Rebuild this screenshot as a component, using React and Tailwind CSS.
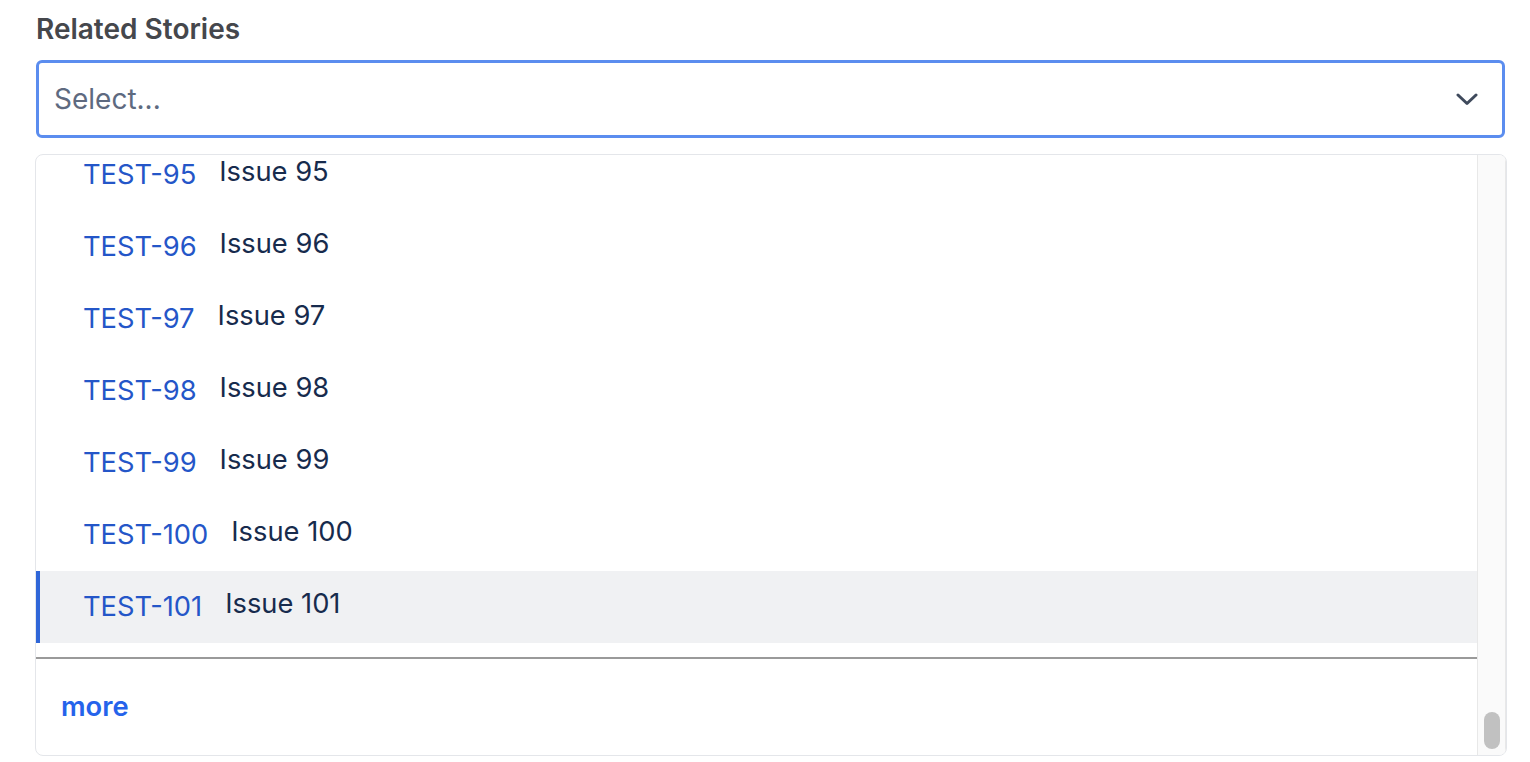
import React from "react";

const rows = [95, 96, 97, 98, 99, 100, 101];

export default function App() {
  return (
    <div
      className="w-[1530px] h-[762px] bg-white overflow-hidden pl-[36px] pt-[11px]"
      style={{ fontFamily: "Inter, 'Noto Sans', sans-serif" }}
    >
      <div className="text-[28px] leading-[36px] font-semibold text-[#45474c]">Related Stories</div>
      <div className="mt-[13px] w-[1469px] h-[78px] border-[3px] border-[#5b8def] rounded-[6px] flex items-center pl-[15px] pr-[24px]">
        <span className="flex-1 text-[28px] text-[#5e6a80]">Select...</span>
        <svg width="22" height="13" viewBox="0 0 22 13" fill="none">
          <path d="M2 2 L11 10.5 L20 2" stroke="#3f4a5c" strokeWidth="3" strokeLinecap="round" strokeLinejoin="round" />
        </svg>
      </div>
      <div className="mt-[16px] ml-[-1px] w-[1472px] h-[602px] border border-[#e4e6ea] rounded-[8px] flex overflow-hidden">
        <div className="flex-1 flex flex-col overflow-hidden">
          <div className="mt-[-16px]">
            {rows.map((n) => {
              const active = n === 101;
              return (
                <div
                  key={n}
                  className={
                    active
                      ? "h-[72px] flex items-center text-[27.3px] bg-[#f0f1f3] border-l-4 border-[#2f66d8] pl-[43px]"
                      : "h-[72px] flex items-center text-[27.3px] pl-[47px]"
                  }
                >
                  <span className="text-[#2456c8]">TEST-{n}</span>
                  <span className="ml-[23px] mb-[6px] text-[#172b4d]">Issue {n}</span>
                </div>
              );
            })}
          </div>
          <div className="mt-[14px] h-[2px] bg-[#9a9a9a]" />
          <div className="h-[96px] flex items-center pl-[25px]">
            <span className="text-[27.3px] font-semibold text-[#2563eb]">more</span>
          </div>
        </div>
        <div className="w-[29px] bg-[#fafafa] border-l border-r border-[#e8e8e8] flex flex-col justify-end items-center pb-[6px]">
          <div className="w-[16px] h-[37px] rounded-full bg-[#c1c1c1]" />
        </div>
      </div>
    </div>
  );
}
